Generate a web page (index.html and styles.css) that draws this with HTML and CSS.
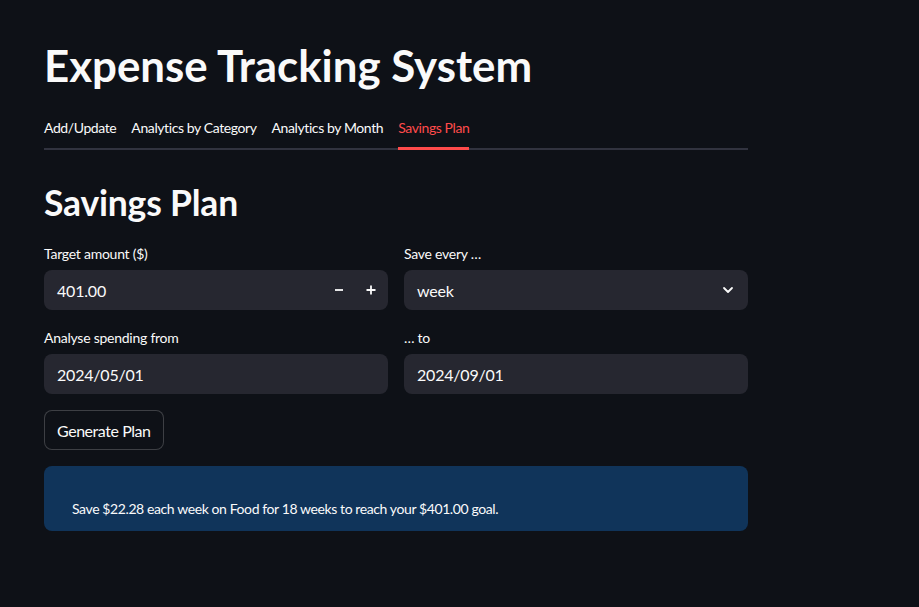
FILE: index.html
```html
<!DOCTYPE html>
<html>
<head>
<meta charset="utf-8">
<link rel="stylesheet" href="styles.css">
</head>
<body>
<main class="main">
  <h1 class="title">Expense Tracking System</h1>
  <nav class="tabs">
    <div class="tab">Add/Update</div>
    <div class="tab">Analytics by Category</div>
    <div class="tab">Analytics by Month</div>
    <div class="tab active">Savings Plan</div>
  </nav>
  <h2 class="subtitle">Savings Plan</h2>
  <div class="grid">
    <div class="field">
      <label class="label">Target amount ($)</label>
      <div class="input number">
        <span class="value">401.00</span>
        <span class="steppers">
          <svg width="12" height="12" viewBox="0 0 12 12"><path d="M2 6h8" stroke="#fafafa" stroke-width="1.8"/></svg>
          <svg width="12" height="12" viewBox="0 0 12 12"><path d="M1.5 6h9M6 1.5v9" stroke="#fafafa" stroke-width="1.8"/></svg>
        </span>
      </div>
    </div>
    <div class="field">
      <label class="label">Save every …</label>
      <div class="input">
        <span class="value">week</span>
        <svg class="chev" width="14" height="14" viewBox="0 0 14 14"><path d="M3 5l4 4 4-4" fill="none" stroke="#fafafa" stroke-width="1.8" stroke-linecap="round" stroke-linejoin="round"/></svg>
      </div>
    </div>
    <div class="field">
      <label class="label">Analyse spending from</label>
      <div class="input"><span class="value">2024/05/01</span></div>
    </div>
    <div class="field">
      <label class="label">… to</label>
      <div class="input"><span class="value">2024/09/01</span></div>
    </div>
  </div>
  <button class="btn">Generate Plan</button>
  <div class="info">
    <p>Save $22.28 each week on Food for 18 weeks to reach your $401.00 goal.</p>
  </div>
</main>
</body>
</html>
```
FILE: styles.css
```css
* { box-sizing: border-box; }
html, body { margin: 0; padding: 0; }
body {
  background: #0e1117;
  color: #fafafa;
  font-family: "Lato", "Noto Sans", sans-serif;
  width: 919px;
  height: 607px;
  overflow: hidden;
}
.main {
  width: 704px;
  margin-left: 44px;
  padding-top: 38px;
  display: flex;
  flex-direction: column;
}
.title {
  margin: 0;
  font-size: 43.8px;
  font-weight: 700;
  line-height: 54px;
  letter-spacing: 0;
}
.tabs {
  margin-top: 17px;
  display: flex;
  gap: 15px;
  border-bottom: 2px solid #31333f;
  height: 41px;
}
.tab {
  font-size: 14px;
  line-height: 20px;
  padding-top: 9px;
  height: 41px;
  letter-spacing: -0.4px;
}
.tab.active {
  color: #ff4b4b;
  border-bottom: 3px solid #ff4b4b;
  margin-bottom: -2px;
}
.subtitle {
  margin: 31px 0 0;
  font-size: 35.5px;
  font-weight: 700;
  line-height: 44px;
  letter-spacing: -0.2px;
}
.grid {
  margin-top: 20px;
  display: grid;
  grid-template-columns: 1fr 1fr;
  column-gap: 16px;
  row-gap: 19px;
}
.field { display: flex; flex-direction: column; }
.label {
  font-size: 14px;
  line-height: 18px;
  height: 18px;
  margin-bottom: 7px;
  letter-spacing: -0.25px;
}
.input {
  height: 40px;
  background: #262730;
  border-radius: 8px;
  display: flex;
  align-items: center;
  justify-content: space-between;
  padding: 0 13px;
}
.input.number { padding-right: 11px; }
.value { font-size: 16px; letter-spacing: -0.2px; }
.steppers { display: flex; gap: 20px; align-items: center; }
.btn {
  margin-top: 16px;
  align-self: flex-start;
  height: 40px;
  padding: 0 12px;
  background: #0e1117;
  color: #fafafa;
  border: 1px solid rgba(250,250,250,0.2);
  border-radius: 8px;
  font-family: inherit;
  font-size: 16px;
  letter-spacing: -0.45px;
}
.info {
  margin-top: 16px;
  height: 65px;
  background: #10345a;
  border-radius: 8px;
  padding: 0 28px;
  display: flex;
  align-items: flex-end;
}
.info p {
  margin: 0 0 14px;
  font-size: 14px;
  letter-spacing: -0.4px;
}
```
